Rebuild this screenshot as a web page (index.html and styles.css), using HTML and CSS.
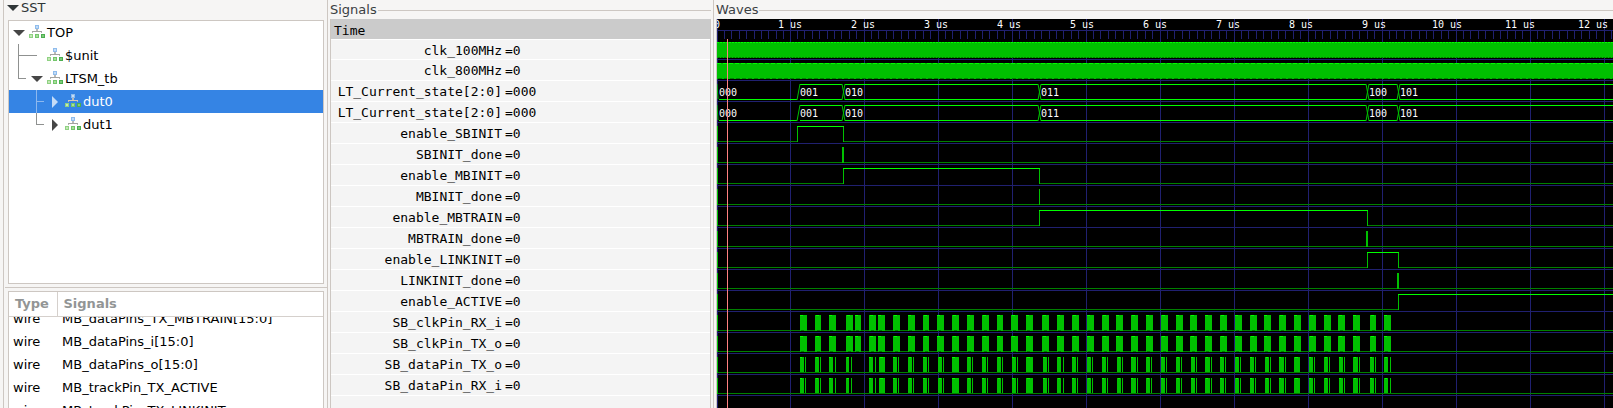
FILE: index.html
```html
<!DOCTYPE html>
<html lang="en">
<head>
<meta charset="utf-8">
<title>Waveform viewer</title>
<link rel="stylesheet" href="styles.css">
</head>
<body>
<svg class="defs" aria-hidden="true">
  <symbol id="hier" viewBox="0 0 16 14">
    <path d="M7 4h2v2h-2z" fill="#b9b9b6"/>
    <path d="M3 6h10v1H3z" fill="currentColor"/>
    <path d="M3 7h1v1H3zM12 7h1v1h-1z" fill="#b9b9b6"/>
    <path d="M6 0h4v4H6z" fill="#8fbcec"/><path d="M7 1h2v2H7z" fill="#c3dcf7"/>
    <path d="M0 9h4v4H0z" fill="#8fd183"/><path d="M1 10h2v2H1z" fill="#c4e9b4"/>
    <path d="M6 9h4v4H6z" fill="#74c66c"/><path d="M7 10h2v2H7z" fill="#a8de9a"/>
    <path d="M12 9h4v4h-4z" fill="#4caf50"/><path d="M13 10h2v2h-2z" fill="#7fca7a"/>
  </symbol>
</svg>
<main class="app">
  <section class="side">
    <button class="sst" type="button" aria-expanded="true">
      <svg width="12" height="6"><path d="M0 0h12L6 6z" fill="#2e3436"/></svg>SST
    </button>
    <ul class="tree" role="tree">
      <li class="node" role="treeitem">
        <svg width="20" height="23"><path d="M4 9h12l-6 6z" fill="#464646"/></svg>
        <svg class="hier" width="16" height="14"><use href="#hier"/></svg><span>TOP</span></li>
      <li class="node" role="treeitem">
        <svg width="38" height="23"><path d="M9 0h1v23H9zM10 11h18v1H10z" fill="#8f9190"/></svg>
        <svg class="hier" width="16" height="14"><use href="#hier"/></svg><span>$unit</span></li>
      <li class="node" role="treeitem">
        <svg width="38" height="23"><path d="M9 0h1v12H9zM10 11h7v1h-7z" fill="#8f9190"/><path d="M22 9h12l-6 6z" fill="#464646"/></svg>
        <svg class="hier" width="16" height="14"><use href="#hier"/></svg><span>LTSM_tb</span></li>
      <li class="node selected" role="treeitem" aria-selected="true">
        <svg width="56" height="23"><path d="M27 0h1v23h-1zM28 11h7v1h-7z" fill="#8db8ee"/><path d="M43 6v12l6-6z" fill="#c5dcf7"/></svg>
        <svg class="hier" width="16" height="14"><use href="#hier"/></svg><span>dut0</span></li>
      <li class="node" role="treeitem">
        <svg width="56" height="23"><path d="M27 0h1v12h-1zM28 11h7v1h-7z" fill="#8f9190"/><path d="M43 6v12l6-6z" fill="#464646"/></svg>
        <svg class="hier" width="16" height="14"><use href="#hier"/></svg><span>dut1</span></li>
    </ul>
    <div class="lower">
      <div class="wires">
        <table class="wire-table wire-head">
          <thead><tr><th class="type">Type</th><th>Signals</th></tr></thead>
        </table>
        <div class="wire-view">
          <table class="wire-table">
            <tbody>
              <tr><td class="type">wire</td><td>MB_dataPins_TX_MBTRAIN[15:0]</td></tr>
              <tr><td class="type">wire</td><td>MB_dataPins_i[15:0]</td></tr>
              <tr><td class="type">wire</td><td>MB_dataPins_o[15:0]</td></tr>
              <tr><td class="type">wire</td><td>MB_trackPin_TX_ACTIVE</td></tr>
              <tr><td class="type">wire</td><td>MB_trackPin_TX_LINKINIT</td></tr>
            </tbody>
          </table>
        </div>
      </div>
    </div>
  </section>
  <section class="frame signals">
    <h2 class="legend">Signals</h2>
    <table class="sig-table">
      <colgroup><col class="name-col"><col></colgroup>
      <thead><tr><th colspan="2">Time</th></tr></thead>
      <tbody>
        <tr><td class="name">clk_100MHz</td><td>=0</td></tr>
        <tr><td class="name">clk_800MHz</td><td>=0</td></tr>
        <tr><td class="name">LT_Current_state[2:0]</td><td>=000</td></tr>
        <tr><td class="name">LT_Current_state[2:0]</td><td>=000</td></tr>
        <tr><td class="name">enable_SBINIT</td><td>=0</td></tr>
        <tr><td class="name">SBINIT_done</td><td>=0</td></tr>
        <tr><td class="name">enable_MBINIT</td><td>=0</td></tr>
        <tr><td class="name">MBINIT_done</td><td>=0</td></tr>
        <tr><td class="name">enable_MBTRAIN</td><td>=0</td></tr>
        <tr><td class="name">MBTRAIN_done</td><td>=0</td></tr>
        <tr><td class="name">enable_LINKINIT</td><td>=0</td></tr>
        <tr><td class="name">LINKINIT_done</td><td>=0</td></tr>
        <tr><td class="name">enable_ACTIVE</td><td>=0</td></tr>
        <tr><td class="name">SB_clkPin_RX_i</td><td>=0</td></tr>
        <tr><td class="name">SB_clkPin_TX_o</td><td>=0</td></tr>
        <tr><td class="name">SB_dataPin_TX_o</td><td>=0</td></tr>
        <tr><td class="name">SB_dataPin_RX_i</td><td>=0</td></tr>
        <tr><td class="name"></td><td></td></tr>
      </tbody>
    </table>
  </section>
  <section class="frame waves">
    <h2 class="legend">Waves</h2>
    <svg class="plot" id="plot" role="img" aria-label="Signal waveforms"></svg>
  </section>
</main>
<script src="waves.js"></script>
</body>
</html>
```

FILE: styles.css
```css
* { box-sizing: border-box; }

body {
  margin: 0;
  background: #f6f5f4;
  color: #000;
  font: 13px/23px "DejaVu Sans", sans-serif;
}

.defs { position: absolute; width: 0; height: 0; }

.app { display: flex; height: 100vh; overflow: hidden; }

.app svg { flex: none; display: block; }

.side {
  display: flex;
  flex-direction: column;
  flex: none;
  width: 325px;
  margin-left: 3px;
  border: solid #cdc7c2;
  border-width: 0 1px;
}

.sst {
  display: flex;
  align-items: center;
  gap: 2px;
  height: 20px;
  padding: 0 0 4px 3px;
  border: 0;
  background: none;
  color: #2e3436;
  font: inherit;
  line-height: 14px;
}

.tree {
  flex: none;
  height: 264px;
  margin: 0 3px 0 4px;
  padding: 0;
  border: 1px solid #cdc7c2;
  background: #fff;
  list-style: none;
}

.node { display: flex; height: 23px; color: #000; }
.node.selected { background: #3584e4; color: #fff; }
.hier { margin: 4px 2px 0 0; color: #a3a3a0; }
.selected .hier { color: #d9c9b4; }

.lower {
  display: flex;
  flex: 1;
  min-height: 0;
  margin: 3px 0 0 1px;
  padding: 3px 3px 0 3px;
  border-top: 1px solid #cdc7c2;
}

.wires {
  flex: 1;
  border: 1px solid #cdc7c2;
  border-bottom: 0;
  background: #fff;
  overflow: hidden;
}

.wire-table { width: 100%; border-collapse: collapse; table-layout: fixed; }
.wire-table td { height: 23px; padding: 0 0 0 5px; white-space: nowrap; }
.wire-table .type { width: 48px; }
.wire-table td.type { padding-left: 4px; }
.wire-head { border-bottom: 1px solid #d5d0cc; }
.wire-head th {
  height: 24px;
  padding: 0 0 0 6px;
  color: #929595;
  text-align: left;
}
.wire-head .type { border-right: 1px solid #d5d0cc; }
.wire-view {
  display: flex;
  flex-direction: column;
  justify-content: flex-end;
  height: 105px;
  overflow: hidden;
}

.frame { display: flex; flex-direction: column; }

.legend {
  display: flex;
  align-items: center;
  flex: none;
  height: 19px;
  margin: 0;
  color: #3b4043;
  font-size: 13px;
  font-weight: normal;
}
.legend::after { content: ""; flex: 1; height: 1px; margin: 2px 0 0 1px; background: #cdc7c2; }

.signals {
  flex: none;
  width: 381px;
  margin: 0 2px;
}

.sig-table {
  border: solid #cdc7c2;
  border-width: 0 1px;
  border-spacing: 0;
  table-layout: fixed;
  width: 100%;
  background: #f4f4f4;
  font: 13px/18px "DejaVu Sans Mono", monospace;
}
.name-col { width: 171px; }
.sig-table th {
  height: 21px;
  padding: 4px 0 0 3px;
  border-bottom: 1px solid #fff;
  background: #cbcbcb;
  font-weight: normal;
  line-height: 16px;
  text-align: left;
}
.sig-table td { height: 21px; padding: 2px 0 0 3px; border-bottom: 1px solid #fff; }
.sig-table tbody tr:first-child td { height: 20px; line-height: 17px; }
.sig-table .name { padding-left: 0; text-align: right; white-space: nowrap; }

.waves {
  flex: 1;
  min-width: 0;
  padding-left: 2px;
  border-left: 1px solid #cdc7c2;
}

.waves .plot {
  flex: 1;
  width: 100%;
  min-height: 0;
  border-left: 1px solid #cdc7c2;
  background: #000;
  overflow: hidden;
}

.plot text {
  fill: #fff;
  font: 10px "DejaVu Sans Mono", monospace;
}
```

FILE: waves.js
```js
const plot = document.getElementById("plot");
const W = plot.clientWidth, H = plot.clientHeight;
const BRIGHT = "#00ff00", MID = "#00c000", DARK = "#008000", GRID = "#202070";
const US = 74, PITCH = 21, FIRST = 40;

function add(tag, attrs, text) {
  const el = document.createElementNS("http://www.w3.org/2000/svg", tag);
  for (const k in attrs) el.setAttribute(k, attrs[k]);
  if (text) el.textContent = text;
  plot.appendChild(el);
}
const rect = (x, y, width, height, fill) => add("rect", { x, y, width, height, fill });
const line = (d, stroke) => add("path", { d, stroke, fill: "none" });

/* Time ruler and grid */
rect(0, 11, W, 1, GRID);
for (let n = 0; n * US < W + US; n++) {
  const x = n ? n * US - 1 : 0;
  rect(x, 0, 1, H, GRID);
  for (let k = 1; k < 10; k++) rect(x + Math.floor(7.4 * k), 12, 1, 8, GRID);
}
for (let i = 0; i < 17; i++) rect(0, FIRST + i * PITCH, W, 1, GRID);
for (let n = 0; n * 73 < W + 73; n++) {
  add("text", { x: n * 73, y: 9, "text-anchor": "middle" }, n ? n + " us" : "0");
}

const low = i => FIRST + i * PITCH - 2;
const high = i => low(i) - 15;

/* Clocks, too dense to resolve into single edges */
[[2, 1], [4, 2]].forEach(([on, off], i) => {
  rect(0, high(i), W, 16, MID);
  for (let x = 0; x < W; x += on + off) {
    rect(x, high(i), on, 1, BRIGHT);
    rect(x + 1, low(i), on, 1, DARK);
  }
});

/* State buses */
const states = [[0, "000"], [81, "001"], [126, "010"], [322, "011"], [650, "100"], [681, "101"]];
for (const i of [2, 3]) {
  const t = high(i), b = low(i);
  states.forEach(([x, label], n) => {
    const end = n + 1 < states.length ? states[n + 1][0] : W + 4;
    if (n) {
      rect(x + 2, t, end - x - 3, 1, BRIGHT);
      line(`M${x - 1} ${b + 1}L${x + 2} ${t}`, MID);
      if (n > 1) line(`M${x - 1} ${t}L${x + 2} ${b + 1}`, MID);
    } else line(`M0 ${t}L1 ${b}`, MID);
    rect(x + 2, b, end - x - 3, 1, BRIGHT);
    add("text", { x: x + 2, y: b - 3 }, label);
  });
}

/* Single-bit signals that stay low apart from one pulse */
const pulses = [[80, 126], [125, 127], [126, 322], [322, 323], [322, 650], [649, 651], [650, 681], [680, 682], [681, W + 1]];
pulses.forEach(([a, b], n) => {
  const i = n + 4;
  rect(0, low(i), W, 1, DARK);
  rect(0, high(i), 1, 16, MID);
  if (b - a < 3) rect(a, high(i), b - a, 16, MID);
  else {
    rect(a, low(i), b - a, 1, "#000");
    for (let x = 73; x < b; x += US) if (x > a) rect(x, low(i), 1, 1, GRID);
    rect(a, high(i), 1, 16, MID);
    rect(b, high(i), 1, 16, MID);
    rect(a, high(i), b - a + 1, 1, BRIGHT);
  }
});

/* Sideband activity: [start, width] bursts, data lines add a trailing strobe */
const clk = [[83, 7], [98, 6], [112, 7], [129, 7], [138, 6], [152, 7], [161, 7], [176, 7], [191, 7], [206, 6],
  [220, 7], [235, 7], [250, 7], [265, 7], [280, 6], [294, 7], [309, 7], [325, 7], [340, 7], [355, 7], [370, 7],
  [385, 7], [399, 7], [414, 7], [429, 7], [444, 7], [459, 7], [473, 7], [488, 7], [503, 7], [518, 7], [533, 7],
  [547, 7], [562, 7], [577, 7], [592, 7], [607, 7], [621, 7], [636, 7], [653, 6], [667, 7]];
const data = [[83, 4, 88], [98, 4, 103], [112, 4, 118], [129, 3, 134], [152, 4, 158], [162, 6], [176, 4, 181],
  [191, 4, 196], [206, 4, 211], [221, 4, 226], [235, 7], [250, 4, 255], [265, 4, 270], [280, 4, 285],
  [295, 4, 300], [309, 7], [326, 4, 331], [340, 4, 346], [355, 4, 360], [370, 4, 375], [385, 4, 390],
  [400, 4, 405], [414, 5, 420], [429, 4, 434], [444, 4, 449], [459, 4, 464], [474, 4, 479], [488, 5, 494],
  [503, 4, 508], [518, 4, 523], [533, 4, 538], [548, 4, 553], [562, 5, 568], [577, 6], [592, 4, 597],
  [607, 4, 612], [622, 4, 627], [636, 5, 642], [653, 4, 658], [667, 4, 673]];
[clk, clk, data, data].forEach((bursts, n) => {
  const i = n + 13;
  rect(0, low(i), W, 1, DARK);
  rect(0, high(i), 1, 16, MID);
  bursts.forEach(([x, w, strobe], k) => {
    rect(x, high(i), w, n < 2 ? 16 : 15, MID);
    rect(x + k % 2, high(i), w > 5 ? 3 : 2, 1, BRIGHT);
    rect(x + 1 + k % 2, low(i), w > 5 ? 3 : 2, 1, DARK);
    if (strobe) rect(strobe, high(i), 1, 15, MID);
  });
});

/* Primary marker */
rect(10, 20, 1, H, "#ff8080");
```
